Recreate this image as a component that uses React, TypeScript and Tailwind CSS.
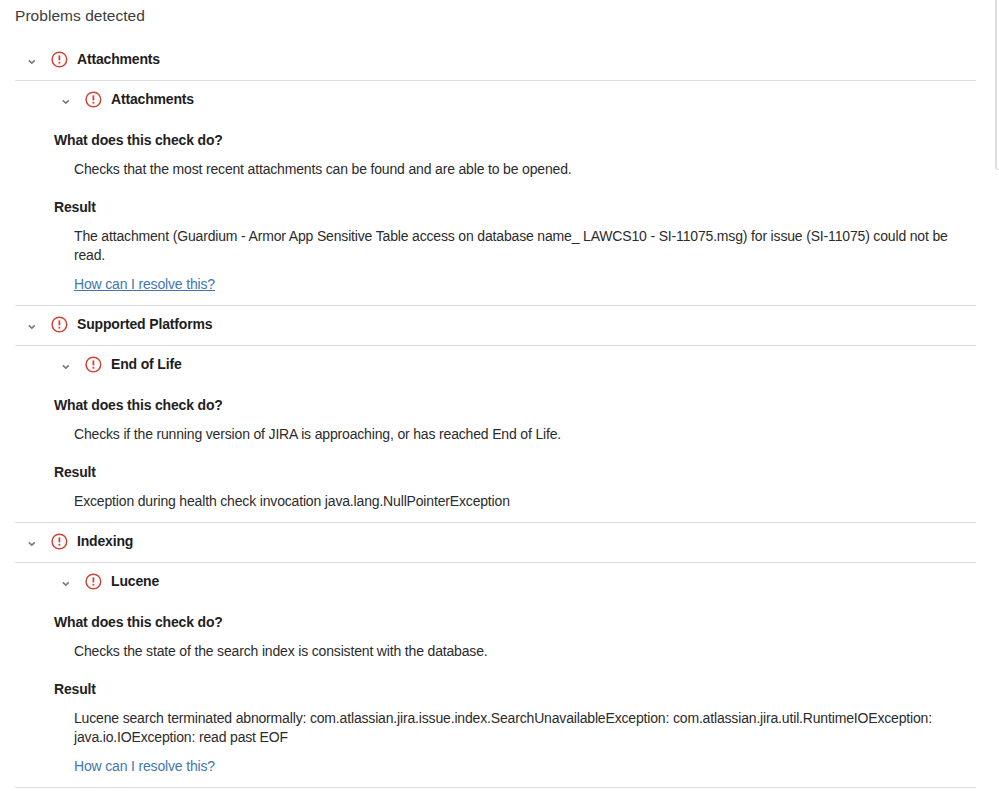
import React from "react";

interface Problem {
  category: string;
  check: string;
  description: string;
  result: string;
  link?: "underlined" | "plain";
}

const problems: Problem[] = [
  {
    category: "Attachments",
    check: "Attachments",
    description: "Checks that the most recent attachments can be found and are able to be opened.",
    result:
      "The attachment (Guardium - Armor App Sensitive Table access on database name_ LAWCS10 - SI-11075.msg) for issue (SI-11075) could not be read.",
    link: "underlined",
  },
  {
    category: "Supported Platforms",
    check: "End of Life",
    description: "Checks if the running version of JIRA is approaching, or has reached End of Life.",
    result: "Exception during health check invocation java.lang.NullPointerException",
  },
  {
    category: "Indexing",
    check: "Lucene",
    description: "Checks the state of the search index is consistent with the database.",
    result:
      "Lucene search terminated abnormally: com.atlassian.jira.issue.index.SearchUnavailableException: com.atlassian.jira.util.RuntimeIOException: java.io.IOException: read past EOF",
    link: "plain",
  },
];

function Chevron() {
  return (
    <svg className="mt-[5px] h-2 w-2 shrink-0" viewBox="0 0 8 8" fill="none" stroke="#7a7a7a" strokeWidth="1.6">
      <path d="M0.8 2.4 3.8 5.2 6.8 2.4" />
    </svg>
  );
}

function ErrorIcon() {
  return (
    <svg className="h-[17px] w-[17px] shrink-0" viewBox="0 0 17 17" fill="none">
      <circle cx="8.4" cy="8.5" r="7.3" stroke="#d04437" strokeWidth="1.5" />
      <path d="M8.4 4.4v5" stroke="#d04437" strokeWidth="1.8" />
      <path d="M8.4 10.8v1.8" stroke="#d04437" strokeWidth="1.8" />
    </svg>
  );
}

function Heading({ children }: { children: React.ReactNode }) {
  return (
    <div className="flex h-[39px] items-center pb-[2px]">
      <Chevron />
      <div className="ml-[15px] mr-[9px] pb-px">
        <ErrorIcon />
      </div>
      <h2 className="font-bold text-[#1d1d1d]">{children}</h2>
    </div>
  );
}

function ProblemSection({ problem }: { problem: Problem }) {
  return (
    <section className="border-b border-[#dddddd]">
      <div className="border-b border-[#dddddd] pl-[13px]">
        <Heading>{problem.category}</Heading>
      </div>
      <div className="pl-[47px]">
        <Heading>{problem.check}</Heading>
      </div>
      <div className="pb-[11px] pl-[39px] pt-[11px]">
        <h3 className="font-bold text-[#222222]">What does this check do?</h3>
        <p className="ml-5 mt-[10px]">{problem.description}</p>
        <h3 className="mt-[19px] font-bold text-[#222222]">Result</h3>
        <p className="ml-5 mr-5 mt-[10px]">{problem.result}</p>
        {problem.link && (
          <a
            href="#"
            className={
              problem.link === "underlined"
                ? "ml-5 mt-[10px] block w-fit text-[#4376b0] underline"
                : "ml-5 mt-[10px] block w-fit text-[#4376b0]"
            }
          >
            How can I resolve this?
          </a>
        )}
      </div>
    </section>
  );
}

export default function App() {
  return (
    <div className="flex h-[791px] w-[999px] justify-between overflow-hidden bg-white font-['Liberation_Sans',sans-serif] text-[14px] leading-[19px] tracking-[-0.165px] text-[#2b2b2b]">
      <main className="ml-[15px] w-[961px]">
        <h1 className="h-[41px] pt-[5px] text-[15.5px] leading-[21px] tracking-[0.04px] text-[#3c3c3c]">
          Problems detected
        </h1>
        {problems.map((problem) => (
          <ProblemSection key={problem.category} problem={problem} />
        ))}
      </main>
      <div className="h-[170px] w-[4px] rounded-bl-[3px] border-b border-l-2 border-[#dddddd]" />
    </div>
  );
}
